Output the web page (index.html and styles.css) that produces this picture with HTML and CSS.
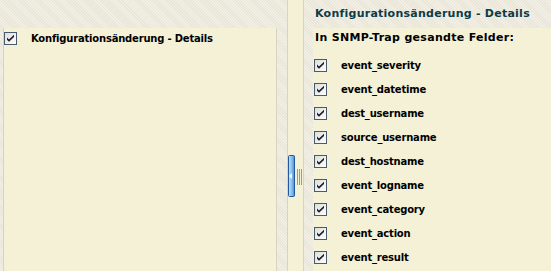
FILE: index.html
```html
<!DOCTYPE html>
<html>
<head>
  <title>SNMP-Trap Felder</title>
  <link rel="stylesheet" href="styles.css">
</head>
<body>
  <div class="layout">
    <div class="left-pane">
      <div class="panel">
        <div class="row row-top">
          <svg class="check" width="13" height="13" viewBox="0 0 13 13"><use href="#cb"/></svg>
          <span class="label">Konfigurationsänderung - Details</span>
        </div>
      </div>
    </div>

    <div class="splitter">
      <div class="handle">
        <svg width="7" height="42" viewBox="0 0 7 42">
          <defs>
            <linearGradient id="hg" x1="0" y1="0" x2="1" y2="0">
              <stop offset="0" stop-color="#c6e2fb"/>
              <stop offset="0.5" stop-color="#8fc0f0"/>
              <stop offset="1" stop-color="#4f8ad6"/>
            </linearGradient>
          </defs>
          <rect x="0.5" y="0.5" width="6" height="41" rx="1" fill="url(#hg)" stroke="#1f5aa0"/>
          <polygon points="1,21 4,18 4,24" fill="#ffffff"/>
        </svg>
      </div>
      <div class="grip"><span></span><span></span><span></span></div>
    </div>

    <div class="right-pane">
      <div class="heading">Konfigurationsänderung - Details</div>
      <div class="panel panel-right">
        <div class="title">In SNMP-Trap gesandte Felder:</div>
        <div class="row"><svg class="check" width="13" height="13" viewBox="0 0 13 13"><use href="#cb"/></svg><span class="label">event_severity</span></div>
        <div class="row"><svg class="check" width="13" height="13" viewBox="0 0 13 13"><use href="#cb"/></svg><span class="label">event_datetime</span></div>
        <div class="row"><svg class="check" width="13" height="13" viewBox="0 0 13 13"><use href="#cb"/></svg><span class="label">dest_username</span></div>
        <div class="row"><svg class="check" width="13" height="13" viewBox="0 0 13 13"><use href="#cb"/></svg><span class="label">source_username</span></div>
        <div class="row"><svg class="check" width="13" height="13" viewBox="0 0 13 13"><use href="#cb"/></svg><span class="label">dest_hostname</span></div>
        <div class="row"><svg class="check" width="13" height="13" viewBox="0 0 13 13"><use href="#cb"/></svg><span class="label">event_logname</span></div>
        <div class="row"><svg class="check" width="13" height="13" viewBox="0 0 13 13"><use href="#cb"/></svg><span class="label">event_category</span></div>
        <div class="row"><svg class="check" width="13" height="13" viewBox="0 0 13 13"><use href="#cb"/></svg><span class="label">event_action</span></div>
        <div class="row"><svg class="check" width="13" height="13" viewBox="0 0 13 13"><use href="#cb"/></svg><span class="label">event_result</span></div>
      </div>
    </div>
  </div>

  <!-- shared checkbox drawing -->
  <svg width="0" height="0" class="defs">
    <defs>
      <linearGradient id="cbg" x1="0" y1="0" x2="1" y2="1">
        <stop offset="0" stop-color="#dcdcd6"/>
        <stop offset="1" stop-color="#ffffff"/>
      </linearGradient>
      <g id="cb">
        <rect x="0.5" y="0.5" width="12" height="12" fill="url(#cbg)" stroke="#4a5a6e"/>
        <path d="M3 5.5 L5 7.5 L10 2.8 L10 5 L5 9.8 L3 7.8 Z" fill="#1b1b2e"/>
      </g>
    </defs>
  </svg>
</body>
</html>
```

FILE: styles.css
```css
body {
  margin: 0;
  padding: 0;
  font-family: "DejaVu Sans", Verdana, sans-serif;
  font-weight: bold;
  color: #000000;
}

.defs {
  position: absolute;
}

.layout {
  display: flex;
  width: 551px;
  height: 271px;
  overflow: hidden;
}

.left-pane,
.right-pane {
  background-color: #eeebe0;
  background-image: repeating-linear-gradient(45deg, #f2efe7 0 1px, #e9e6d8 1px 2px);
}

.left-pane {
  width: 287px;
  padding: 28px 10px 0 3px;
  box-sizing: border-box;
  display: flex;
}

.panel {
  flex: 1;
  background: #f5f1d6;
}

.left-pane .panel {
  border-left: 1px solid #d8d4c2;
  border-right: 1px solid #d8d4c2;
}

.row {
  display: flex;
  align-items: center;
  height: 24px;
  padding-left: 1px;
}

.row-top {
  height: 20px;
  padding-left: 0;
}

.check {
  flex: none;
  margin-right: 14px;
}

.label {
  font-size: 10px;
  letter-spacing: -0.2px;
}

.splitter {
  width: 17px;
  box-sizing: border-box;
  background: #f5f1d6;
  border-left: 1px solid #d8d4c2;
  border-right: 1px solid #d8d4c2;
  display: flex;
  align-items: flex-start;
}

.handle {
  margin-top: 155px;
  height: 42px;
}

.handle svg {
  display: block;
}

.grip {
  display: flex;
  gap: 1px;
  margin-top: 169px;
  margin-left: 2px;
}

.grip span {
  width: 1px;
  height: 16px;
  background: #9a9a96;
}

.right-pane {
  flex: 1;
  display: flex;
  flex-direction: column;
}

.heading {
  height: 28px;
  line-height: 28px;
  padding-left: 11px;
  font-size: 11px;
  letter-spacing: 0.25px;
  color: #0d3b47;
}

.panel-right {
  margin-left: 9px;
}

.title {
  height: 20px;
  line-height: 20px;
  margin-bottom: 5px;
  padding-left: 2px;
  font-size: 11px;
  letter-spacing: 0.3px;
}
```
